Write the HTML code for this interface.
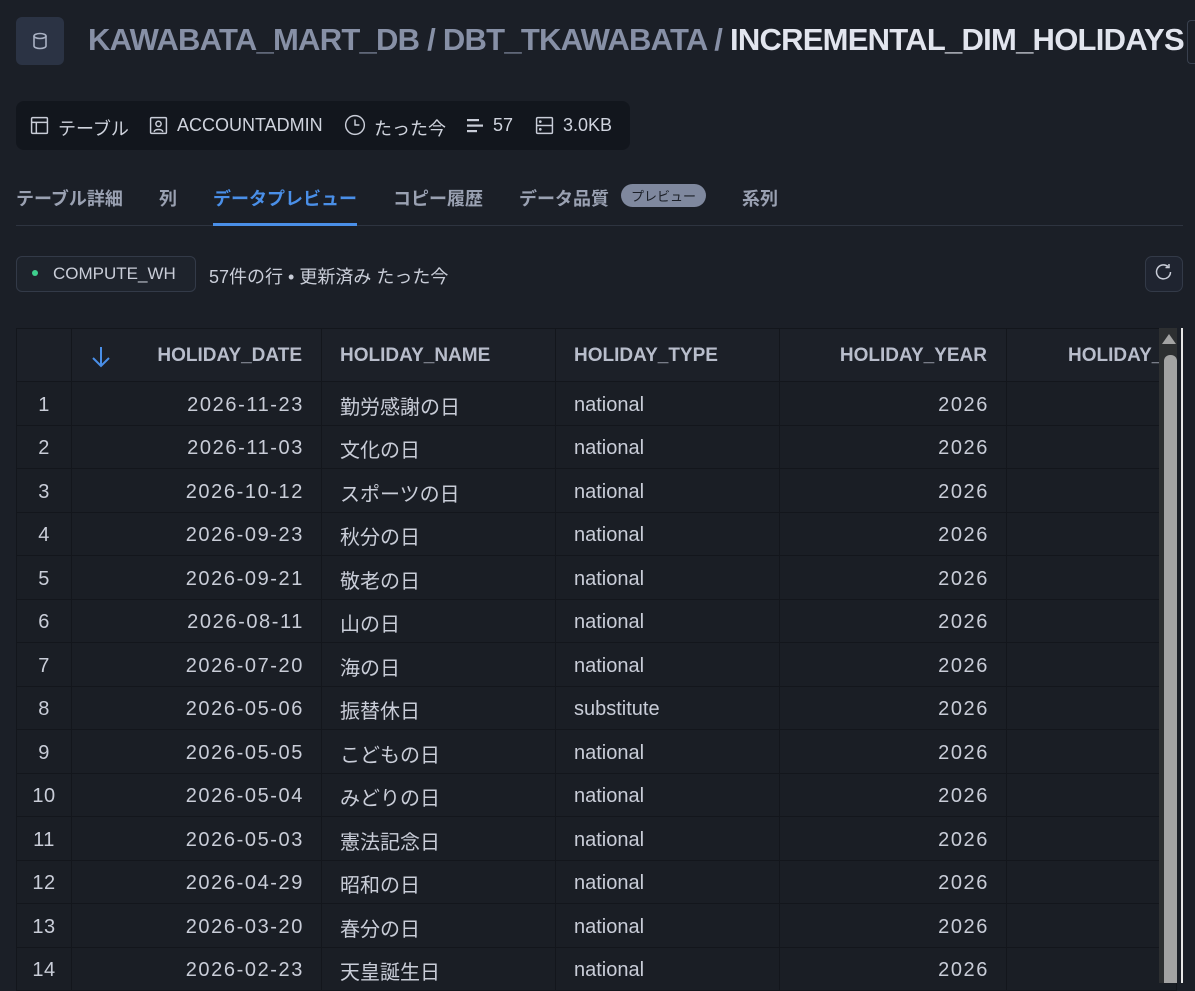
<!DOCTYPE html>
<html><head><meta charset="utf-8"><style>
*{box-sizing:border-box;margin:0;padding:0}
body{width:1195px;height:983px;overflow:hidden;background:#1b1f27;font-family:"Liberation Sans","Noto Sans CJK JP",sans-serif;color:#c9cdd8;position:relative}
.abs{position:absolute}
.dbicon{left:16px;top:17px;width:48px;height:48px;border-radius:6px;background:#2b3344}
.title{left:88px;top:22px;font-size:31px;font-weight:bold;color:#8790a6;white-space:nowrap;letter-spacing:-0.75px}
.title b{color:#e2e5ee}
.meta{left:16px;top:101px;width:614px;height:49px;background:#12161d;border-radius:8px;font-size:18px;color:#d0d4de;white-space:nowrap}
.meta span,.meta svg{position:absolute}
.meta span{top:14px}
.tabs{left:16px;top:185px;font-size:18px;font-weight:bold;color:#9aa1b2;white-space:nowrap}
.tabs span{position:absolute;top:0}
.line{left:16px;top:225px;width:1167px;height:1px;background:#2e3440}
.ul{left:213px;top:223px;width:144px;height:3px;background:#4a8fe8}
.badge{left:621px;top:184px;width:85px;height:23px;border-radius:12px;background:#7f889e;color:#1b1f27;font-size:13px;text-align:center;line-height:26px;font-weight:normal}
.wh{left:16px;top:256px;width:180px;height:36px;border:1px solid #333a48;border-radius:6px;background:#1e232c;font-size:17px;color:#c9cdd8;line-height:33px;padding-left:36px}
.dot{left:32px;top:270px;width:6px;height:6px;border-radius:3px;background:#3ecf8e}
.rows{left:209px;top:263px;font-size:18px;color:#c9cdd8}
.refresh{left:1145px;top:256px;width:38px;height:36px;border:1px solid #333a48;border-radius:7px;background:#1f2430}
table{position:absolute;left:16px;top:328px;border-collapse:collapse;table-layout:fixed;width:1160px;background:#1a1e25}
td,th{border:1px solid #13161c;height:43.5px;font-size:20px;white-space:nowrap;overflow:hidden;padding:4px 19px 0 18px}
td.r{letter-spacing:1.6px;padding-right:17px}
th{height:53px;font-size:19px;color:#b8bdcb;background:#1c2028;text-align:left;padding-top:2px}
td.n{text-align:center;padding:4px 0 0 0;letter-spacing:0.5px}
.r{text-align:right}
.sb{left:1159px;top:328px;width:18px;height:655px;background:#2d2f31}
.thumb{left:1164px;top:355px;width:13px;height:628px;background:#a3a3a3;border-radius:6px 6px 0 0}
.wl{left:1181px;top:328px;width:2px;height:655px;background:#e8e8e8}
</style></head><body>
<div class="abs dbicon"><svg width="48" height="48" viewBox="0 0 48 48" fill="none" stroke="#aab2c4" stroke-width="1.6"><ellipse cx="24" cy="19" rx="6" ry="2.5"/><path d="M18 19v10c0 1.4 2.7 2.5 6 2.5s6-1.1 6-2.5V19"/></svg></div>
<div class="abs title">KAWABATA_MART_DB / DBT_TKAWABATA / <b>INCREMENTAL_DIM_HOLIDAYS</b></div>
<div class="abs" style="left:1187px;top:20px;width:8px;height:44px;border:1px solid #39404e;border-right:none;border-radius:4px 0 0 4px"></div>
<div class="abs meta">
<svg style="left:14px;top:15px" width="19" height="19" viewBox="0 0 18 18" fill="none" stroke="#c9cdd8" stroke-width="1.4"><rect x="1.5" y="1.5" width="15" height="15" rx="1"/><path d="M1.5 6h15M6 6v10.5"/></svg><span style="left:42px">テーブル</span>
<svg style="left:133px;top:15px" width="19" height="19" viewBox="0 0 18 18" fill="none" stroke="#c9cdd8" stroke-width="1.4"><rect x="1.5" y="1.5" width="15" height="15" rx="1"/><circle cx="9" cy="7.5" r="2.5"/><path d="M5 15c0-3 8-3 8 0"/></svg><span style="left:161px">ACCOUNTADMIN</span>
<svg style="left:328px;top:13px" width="22" height="22" viewBox="0 0 20 20" fill="none" stroke="#c9cdd8" stroke-width="1.3"><circle cx="10" cy="10" r="8.5"/><path d="M10 5v5h4"/></svg><span style="left:358px">たった今</span>
<svg style="left:450px;top:16px" width="18" height="18" viewBox="0 0 18 18" fill="#c9cdd8"><rect x="1" y="2" width="12" height="2.2"/><rect x="1" y="7.5" width="16" height="2.2"/><rect x="1" y="13" width="10" height="2.2"/></svg><span style="left:477px">57</span>
<svg style="left:519px;top:15px" width="19" height="19" viewBox="0 0 18 18" fill="none" stroke="#c9cdd8" stroke-width="1.4"><rect x="1.5" y="1.5" width="15" height="15" rx="1"/><path d="M1.5 9h15"/><circle cx="5" cy="5.3" r=".6"/><circle cx="5" cy="12.7" r=".6"/></svg><span style="left:547px">3.0KB</span>
</div>
<div class="abs tabs"><span style="left:0">テーブル詳細</span><span style="left:143px">列</span><span style="left:197px;color:#4a8fe8">データプレビュー</span><span style="left:377px">コピー履歴</span><span style="left:503px">データ品質</span><span style="left:726px">系列</span></div>
<div class="abs badge">プレビュー</div>
<div class="abs line"></div><div class="abs ul"></div>
<div class="abs wh">COMPUTE_WH</div><div class="abs dot"></div>
<div class="abs rows">57件の行 • 更新済み たった今</div>
<div class="abs refresh"><svg width="36" height="34" viewBox="0 0 36 34" fill="none" stroke="#c9cdd8" stroke-width="1.5"><path d="M24.5 15a7 7 0 1 1-2.5-5.5"/><path d="M23 7v3.5h-3.5"/></svg></div>
<table>
<colgroup><col style="width:55px"><col style="width:250px"><col style="width:234px"><col style="width:224px"><col style="width:227px"><col style="width:170px"></colgroup>
<tr><th></th><th class="r" style="position:relative"><svg style="position:absolute;left:18px;top:16px" width="22" height="24" viewBox="0 0 22 24" fill="none" stroke="#4a8fe8" stroke-width="2"><path d="M11 2v19M3 13l8 8 8-8"/></svg>HOLIDAY_DATE</th><th>HOLIDAY_NAME</th><th>HOLIDAY_TYPE</th><th class="r">HOLIDAY_YEAR</th><th style="text-align:left;padding-left:61px">HOLIDAY_MONTH</th></tr>
<tr><td class="n">1</td><td class="r">2026-11-23</td><td>勤労感謝の日</td><td>national</td><td class="r">2026</td><td></td></tr>
<tr><td class="n">2</td><td class="r">2026-11-03</td><td>文化の日</td><td>national</td><td class="r">2026</td><td></td></tr>
<tr><td class="n">3</td><td class="r">2026-10-12</td><td>スポーツの日</td><td>national</td><td class="r">2026</td><td></td></tr>
<tr><td class="n">4</td><td class="r">2026-09-23</td><td>秋分の日</td><td>national</td><td class="r">2026</td><td></td></tr>
<tr><td class="n">5</td><td class="r">2026-09-21</td><td>敬老の日</td><td>national</td><td class="r">2026</td><td></td></tr>
<tr><td class="n">6</td><td class="r">2026-08-11</td><td>山の日</td><td>national</td><td class="r">2026</td><td></td></tr>
<tr><td class="n">7</td><td class="r">2026-07-20</td><td>海の日</td><td>national</td><td class="r">2026</td><td></td></tr>
<tr><td class="n">8</td><td class="r">2026-05-06</td><td>振替休日</td><td>substitute</td><td class="r">2026</td><td></td></tr>
<tr><td class="n">9</td><td class="r">2026-05-05</td><td>こどもの日</td><td>national</td><td class="r">2026</td><td></td></tr>
<tr><td class="n">10</td><td class="r">2026-05-04</td><td>みどりの日</td><td>national</td><td class="r">2026</td><td></td></tr>
<tr><td class="n">11</td><td class="r">2026-05-03</td><td>憲法記念日</td><td>national</td><td class="r">2026</td><td></td></tr>
<tr><td class="n">12</td><td class="r">2026-04-29</td><td>昭和の日</td><td>national</td><td class="r">2026</td><td></td></tr>
<tr><td class="n">13</td><td class="r">2026-03-20</td><td>春分の日</td><td>national</td><td class="r">2026</td><td></td></tr>
<tr><td class="n">14</td><td class="r">2026-02-23</td><td>天皇誕生日</td><td>national</td><td class="r">2026</td><td></td></tr>
</table>
<div class="abs sb"></div><div class="abs thumb"></div><div class="abs wl"></div>
<svg class="abs" style="left:1161px;top:333px" width="16" height="12" viewBox="0 0 16 12"><path d="M8 1l7 10H1z" fill="#a3a3a3"/></svg>
</body></html>
